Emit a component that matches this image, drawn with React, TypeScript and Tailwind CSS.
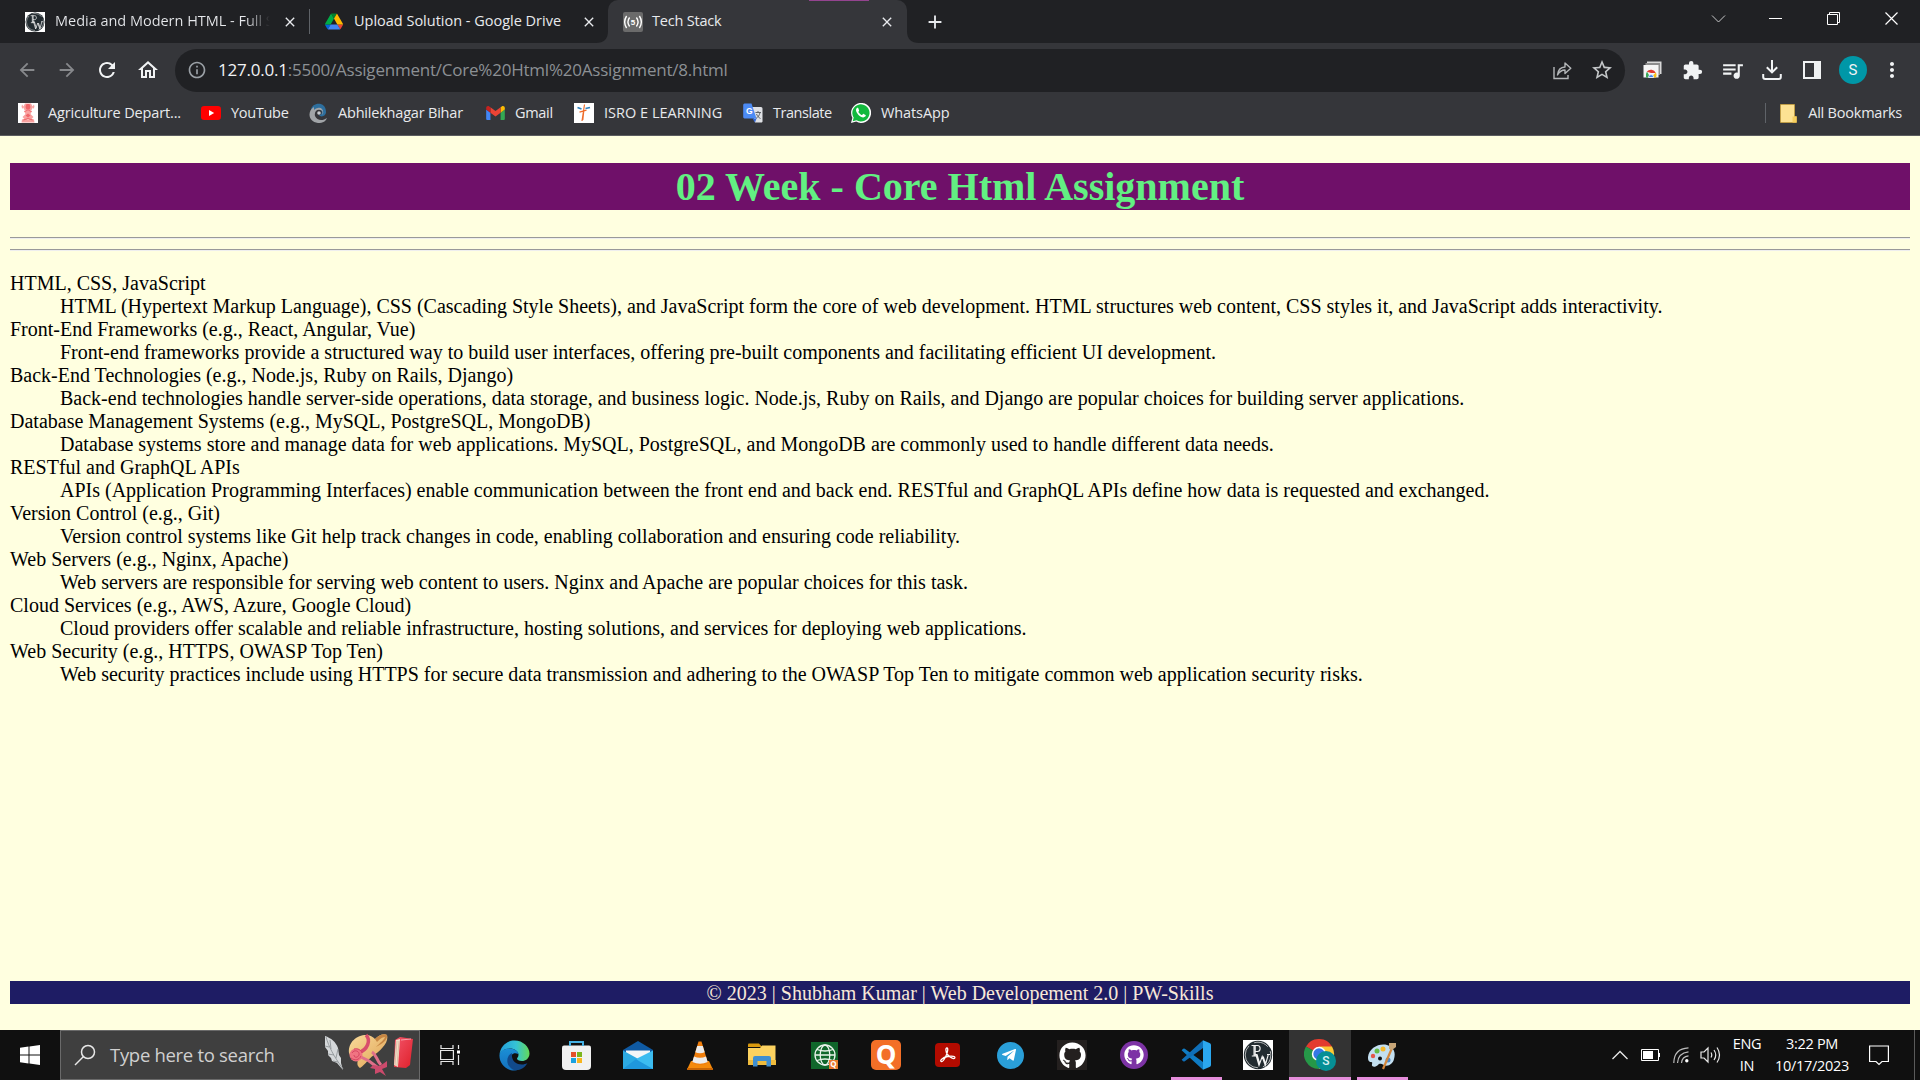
import React from "react";
import {
  MdArrowBack, MdArrowForward, MdRefresh, MdOutlineHome, MdInfoOutline, MdStarOutline,
  MdExtension, MdQueueMusic, MdMoreVert, MdClose, MdAdd,
} from "react-icons/md";
import { FaGithub, FaTelegramPlane } from "react-icons/fa";

const ui = "font-['Open_Sans','Noto_Sans',sans-serif]";

function PW({ size }: { size: number }) {
  return (
    <svg width={size} height={size} viewBox="0 0 30 30" className="shrink-0">
      <rect width="30" height="30" fill="#fff" />
      <circle cx="15" cy="15" r="14.2" fill="#222b30" />
      <circle cx="15" cy="15" r="12.8" fill="none" stroke="#d8d8d8" strokeWidth="0.8" strokeDasharray="15 5 30 6" />
      <path d="M8.500 5.500h6c3.500 0 3.500 6 0 6H12M11 5.500V16M12.200 5.500V16M8.800 16h5.400" fill="none" stroke="#f2f2f2" strokeWidth="1.100" />
      <path d="M11.500 14.500h3M13 15l3 10.500 3.200-9 3 9 3-10.500M14.200 15l2.600 9M20.200 16.500l2.500 7.500M24 14.500h3" fill="none" stroke="#f2f2f2" strokeWidth="1.100" />
    </svg>
  );
}

function Drive() {
  return (
    <svg width="18" height="17" viewBox="0 0 87.3 78" className="shrink-0">
      <path d="m6.6 66.85 3.85 6.65c.8 1.4 1.95 2.5 3.3 3.3l13.75-23.8h-27.5c0 1.55.4 3.1 1.2 4.5z" fill="#0066da" />
      <path d="m43.65 25-13.75-23.8c-1.35.8-2.5 1.9-3.3 3.3l-25.4 44a9.06 9.06 0 0 0 -1.2 4.5h27.5z" fill="#00ac47" />
      <path d="m73.55 76.8c1.35-.8 2.5-1.9 3.3-3.3l1.6-2.75 7.65-13.25c.8-1.4 1.2-2.95 1.2-4.5h-27.502l5.852 11.5z" fill="#ea4335" />
      <path d="m43.65 25 13.75-23.8c-1.35-.8-2.9-1.2-4.5-1.2h-18.5c-1.6 0-3.15.45-4.5 1.2z" fill="#00832d" />
      <path d="m59.8 53h-32.3l-13.75 23.8c1.35.8 2.9 1.2 4.5 1.2h50.8c1.6 0 3.15-.45 4.5-1.2z" fill="#4285f4" />
      <path d="m73.4 26.5-12.7-22c-.8-1.4-1.95-2.5-3.3-3.3l-13.75 23.8 16.15 28h27.45c0-1.55-.4-3.1-1.2-4.5z" fill="#ffba00" />
    </svg>
  );
}

function LiveServer() {
  return (
    <svg width="20" height="20" viewBox="0 0 20 20" className="shrink-0">
      <rect width="20" height="20" rx="2" fill="#6b6b6b" />
      <g fill="none" stroke="#fff" strokeWidth="1.4">
        <path d="M3.6 4Q-.3 10 3.6 16M6.6 5.5Q3.2 10 6.6 14.5M16.4 4Q20.3 10 16.4 16M13.4 5.5Q16.8 10 13.4 14.5" />
      </g>
      <text x="10" y="12.800" fontSize="8" fontWeight="700" textAnchor="middle" fill="#fff" fontFamily="Liberation Sans">5</text>
    </svg>
  );
}

function Agriculture() {
  return (
    <svg width="20" height="20" viewBox="0 0 20 20">
      <rect width="20" height="20" fill="#fff" />
      <g fill="#f9a3a1">
        <path d="M7 .500h6l1.500 3-1 4h-7l-1-4z" />
        <path d="M4 1.500l2 2.500-1 2-1.500-2zM16 1.500L14 4l1 2 1.500-2zM6 8h8l-1.500 3 3 3-2 2h-7l-2-2 3-3z" />
        <path d="M4 16.500l3-1 3 1 3-1 3 1 .500 3h-13z" />
      </g>
      <path d="M8.500 1h3l1 3-1 2.500h-3l-1-2.500zM7.500 12.500l2.500-2 2.500 2-2.500 2z" fill="#f0666a" />
      <path d="M6.500 8.500l3.500-1.500 3.500 1.500M5.500 17l4.500-1.500 4.500 1.500" fill="none" stroke="#f0666a" />
    </svg>
  );
}

function YouTube() {
  return (
    <svg width="20" height="14" viewBox="0 0 20 14">
      <rect width="20" height="14" rx="3.2" fill="#f00" />
      <path d="M8 4l5.2 3L8 10z" fill="#fff" />
    </svg>
  );
}

function Abhilekh() {
  return (
    <svg width="19" height="20" viewBox="0 0 19 20">
      <path d="M2 7C3-1 17-2 17 9c0 4-5 6-7 3 4 0 4-6-1-6C6 6 4 9 4 12z" fill="#2d6f9e" />
      <path d="M5 4C-2 8-1 19 9 20c5 0 8-2 9-5-4 3-10 3-12-2-1-4 2-7 5-6 3 0 3 3 2 5 3-3 0-8-4-7-2 0-3 1-4 2z" fill="#a0a4a7" />
      <circle cx="10" cy="10" r="1.8" fill="#c8ccd0" />
    </svg>
  );
}

function Gmail() {
  return (
    <svg width="19" height="14" viewBox="52 42 88 66">
      <path fill="#4285f4" d="M58 108h14V74L52 59v43c0 3.32 2.69 6 6 6" />
      <path fill="#34a853" d="M120 108h14c3.32 0 6-2.69 6-6V59l-20 15" />
      <path fill="#fbbc04" d="M120 48v26l20-15v-8c0-7.42-8.47-11.65-14.4-7.2" />
      <path fill="#ea4335" d="M72 74V48l24 18 24-18v26L96 92" />
      <path fill="#c5221f" d="M52 51v8l20 15V48l-5.6-4.2c-5.94-4.45-14.4-.22-14.4 7.2" />
    </svg>
  );
}

function Isro() {
  return (
    <svg width="20" height="20" viewBox="0 0 20 20">
      <rect width="20" height="20" fill="#fff" />
      <path d="M10.500 1.500L8 18M9.800 7.500l-1 9.500M5.500 9.200l7-2" stroke="#ee6c2b" strokeWidth="1.200" fill="none" />
      <path d="M3.500 4.500l4 1.500M11.500 5.600l4.500-1.200" stroke="#2d80bd" strokeWidth="1.600" />
    </svg>
  );
}

function Translate() {
  return (
    <svg width="20" height="20" viewBox="0 0 20 20">
      <path d="M8 4h10a1.5 1.5 0 0 1 1.5 1.5v12A1.5 1.5 0 0 1 18 19.500h-6z" fill="#dfe1e5" />
      <path d="M12.500 9.500h5.500M15 8v1.500M17 9.500c-.5 3-2 4.500-4 6M13.500 11c.8 2 2.200 3.600 4 4.500" stroke="#5f6368" fill="none" />
      <path d="M9.500 15.500h4L12 19.500z" fill="#3367d6" />
      <path d="M1.500.500h7l5 15h-12A1.500 1.500 0 0 1 .200 14V2A1.500 1.500 0 0 1 1.500.500z" fill="#4c8bf5" />
      <text x="6.200" y="10.800" fontSize="8.500" fontWeight="700" textAnchor="middle" fill="#fff" fontFamily="Liberation Sans">G</text>
    </svg>
  );
}

function WhatsApp() {
  return (
    <svg width="20" height="20" viewBox="0 0 20 20">
      <path d="M0 20l1.400-5.200A10 10 0 1 1 5.200 18.600z" fill="#fff" />
      <path d="M1.700 18.300l1-3.700A8.600 8.600 0 1 1 5.500 17.300z" fill="#12b93d" />
      <path d="M7.300 5.200c-.3-.6-1-.5-1.400-.1C4 7 5.500 9.800 7.500 11.900c2.200 2.200 5 3.400 6.700 1.700.6-.6.700-1.500.400-1.700l-2-1c-.4-.1-.600 0-1.200.9-.3.400-1 0-1.700-.4-1.200-.8-2.300-2.100-2.300-2.500 0-.3.800-.9.700-1.400z" fill="#fff" />
    </svg>
  );
}

function ShareIcon() {
  return (
    <svg width="19" height="19" viewBox="0 0 19 19" fill="none" stroke="#b4b7b9" strokeWidth="1.400">
      <path d="M1 6v11.500h14V14" />
      <path d="M4.500 14C5 9 8 6.200 12 6V2l5.800 5.300L12 12.500V9c-3.500 0-5.500 1.500-7.500 5z" strokeLinejoin="round" />
    </svg>
  );
}

function CaptureIcon() {
  return (
    <svg width="19" height="18" viewBox="0 0 19 18">
      <path d="M4 .500h14.500V13H15V4H4z" fill="#d8d8d8" />
      <rect x="2.500" y="2" width="14.500" height="12" fill="#8d8d8d" />
      <rect x=".500" y="4" width="15" height="12.500" fill="#f5f5f5" />
      <path d="M3 16.500a5.300 6.500 0 0 1 1-6l3.300 6z" fill="#3aa757" />
      <path d="M3.800 10.800a5.200 5.200 0 0 1 9 1.200H8z" fill="#e33b2e" />
      <path d="M12.800 11.500c1 1.500.8 3.500.2 5H8z" fill="#fbc116" />
      <path d="M5.500 16.500a2.600 2.900 0 0 1 5.200 0z" fill="#4285f4" stroke="#fff" strokeWidth=".8" />
    </svg>
  );
}

function DownloadIcon() {
  return (
    <svg width="20" height="20" viewBox="0 0 20 20" fill="none" stroke="#f1f3f4" strokeWidth="2">
      <path d="M10 0v12M4.800 7.200L10 12.400l5.200-5.200M1.200 14v3q0 2 2 2h13.600q2 0 2-2v-3" />
    </svg>
  );
}

const bookmarks: [React.ReactNode, string, string, string][] = [
  [<Agriculture />, "Agriculture Depart...", "w-[183px]", "tracking-[-0.15px]"],
  [<YouTube />, "YouTube", "w-[108px]", "tracking-[-0.3px]"],
  [<Abhilekh />, "Abhilekhagar Bihar", "w-[177px]", "tracking-[-0.2px]"],
  [<Gmail />, "Gmail", "w-[88px]", "tracking-[-0.3px]"],
  [<Isro />, "ISRO E LEARNING", "w-[169px]", "tracking-[0.02px]"],
  [<Translate />, "Translate", "w-[108px]", "tracking-[-0.45px]"],
  [<WhatsApp />, "WhatsApp", "w-[110px]", "tracking-[-0.1px]"],
];

const stack: [string, string][] = [
  ["HTML, CSS, JavaScript", "HTML (Hypertext Markup Language), CSS (Cascading Style Sheets), and JavaScript form the core of web development. HTML structures web content, CSS styles it, and JavaScript adds interactivity."],
  ["Front-End Frameworks (e.g., React, Angular, Vue)", "Front-end frameworks provide a structured way to build user interfaces, offering pre-built components and facilitating efficient UI development."],
  ["Back-End Technologies (e.g., Node.js, Ruby on Rails, Django)", "Back-end technologies handle server-side operations, data storage, and business logic. Node.js, Ruby on Rails, and Django are popular choices for building server applications."],
  ["Database Management Systems (e.g., MySQL, PostgreSQL, MongoDB)", "Database systems store and manage data for web applications. MySQL, PostgreSQL, and MongoDB are commonly used to handle different data needs."],
  ["RESTful and GraphQL APIs", "APIs (Application Programming Interfaces) enable communication between the front end and back end. RESTful and GraphQL APIs define how data is requested and exchanged."],
  ["Version Control (e.g., Git)", "Version control systems like Git help track changes in code, enabling collaboration and ensuring code reliability."],
  ["Web Servers (e.g., Nginx, Apache)", "Web servers are responsible for serving web content to users. Nginx and Apache are popular choices for this task."],
  ["Cloud Services (e.g., AWS, Azure, Google Cloud)", "Cloud providers offer scalable and reliable infrastructure, hosting solutions, and services for deploying web applications."],
  ["Web Security (e.g., HTTPS, OWASP Top Ten)", "Web security practices include using HTTPS for secure data transmission and adhering to the OWASP Top Ten to mitigate common web application security risks."],
];

function TabStrip() {
  return (
    <div className="flex h-[43px] items-center bg-[#202124] pl-[25px] text-[14.5px] text-[#e8eaed]">
      <PW size={20} />
      <div className="ml-[10px] w-[217px] whitespace-nowrap bg-gradient-to-r from-[#e8eaed] from-[88%] to-transparent to-[99%] bg-clip-text pb-[2px] tracking-[-0.02px] text-transparent">
        Media and Modern HTML - Full S
      </div>
      <MdClose size={16} className="ml-[10px] shrink-0" />
      <div className="ml-[11px] h-[25px] w-px shrink-0 bg-[#5f6368]" />
      <div className="ml-[15px]"><Drive /></div>
      <div className="ml-[11px] w-[227px] whitespace-nowrap pb-[2px] tracking-[-0.01px]">Upload Solution - Google Drive</div>
      <MdClose size={16} className="shrink-0" />
      <svg width="12" height="12" viewBox="0 0 12 12" className="-ml-px shrink-0 self-end"><path d="M12 0v12H0C8 12 12 8 12 0z" fill="#35363a" /></svg>
      <div className="relative flex h-full w-[299px] shrink-0 items-center rounded-t-[10px] bg-[#35363a] pl-[15px]">
        <div className="absolute left-[201px] top-0 h-px w-[60px] bg-[#94448f]" />
        <LiveServer />
        <div className="ml-[9px] w-[227px] pb-[2px] tracking-[-0.2px]">Tech Stack</div>
        <MdClose size={16} className="shrink-0" />
      </div>
      <svg width="12" height="12" viewBox="0 0 12 12" className="shrink-0 self-end"><path d="M0 0v12h12C4 12 0 8 0 0z" fill="#35363a" /></svg>
      <MdAdd size={22} className="ml-[5px] shrink-0" />
      <div className="ml-auto flex h-full items-start gap-[43px] pr-[21px] pt-[11px]">
        <svg width="15" height="15" viewBox="0 0 15 15" className="mr-[-1px]" fill="none" stroke="#c8c9ca"><path d="M1 4.500l6.500 6.500L14 4.500" /></svg>
        <svg width="15" height="15" viewBox="0 0 15 15" fill="none" stroke="#fff"><path d="M1 7.500h13" /></svg>
        <svg width="15" height="15" viewBox="0 0 15 15" fill="none" stroke="#fff"><path d="M1.500 3.500h10v10h-10zM3.500 3V1.500h10v10H12" /></svg>
        <svg width="15" height="15" viewBox="0 0 15 15" fill="none" stroke="#fff" strokeWidth="1.200"><path d="M1.500 1.500l12 12M13.500 1.500l-12 12" /></svg>
      </div>
    </div>
  );
}

function Toolbar() {
  return (
    <div className="flex h-[53px] items-center bg-[#35363a] pl-[16px] pt-[1px] text-[#f1f3f4]">
      <MdArrowBack size={22} className="shrink-0 text-[#87898c]" />
      <MdArrowForward size={22} className="ml-[18px] shrink-0 text-[#87898c]" />
      <MdRefresh size={24} className="ml-[17px] shrink-0" />
      <MdOutlineHome size={24} className="ml-[17px] shrink-0" />
      <div className="ml-[15px] flex h-[43px] w-[1450px] shrink-0 items-center rounded-full bg-[#202124] pl-[12px] pr-[11px]">
        <MdInfoOutline size={20} className="shrink-0 text-[#9aa0a6]" />
        <div className="ml-[11px] whitespace-nowrap pb-px text-[17px] tracking-[-0.22px] text-[#8c9094]">
          <span className="text-[#f1f3f4]">127.0.0.1</span>:5500/Assigenment/Core%20Html%20Assignment/8.html
        </div>
        <div className="ml-auto"><ShareIcon /></div>
        <MdStarOutline size={24} className="ml-[18px] text-[#c4c7c9]" />
      </div>
      <div className="flex items-center">
        <div className="flex w-[40px] justify-center pl-[14px]"><CaptureIcon /></div>
        <div className="flex w-[40px] justify-center pl-[14px]"><MdExtension size={21} /></div>
        <div className="flex w-[40px] justify-center pl-[14px]"><MdQueueMusic size={25} className="-mx-1" /></div>
        <div className="flex w-[40px] justify-center pl-[14px]"><DownloadIcon /></div>
        <div className="flex w-[40px] justify-center pl-[14px]">
          <div className="h-[18px] w-[18px] border-2 border-r-[7px] border-[#f1f3f4]" />
        </div>
        <div className="ml-[14px] flex h-[28px] w-[28px] items-center justify-center rounded-full bg-[#0097a7] font-['Roboto',sans-serif] text-[15px]">S</div>
        <MdMoreVert size={24} className="ml-[13px]" />
      </div>
    </div>
  );
}

function Bookmarks() {
  return (
    <div className="flex h-[40px] items-center border-b border-[#5c5d60] bg-[#35363a] pb-[5px] pl-[18px] text-[14.5px] text-[#e8eaed]">
      {bookmarks.map(([icon, label, width, tracking]) => (
        <div key={label} className={`flex shrink-0 items-center gap-[10px] whitespace-nowrap ${width} ${tracking}`}>
          <span className="shrink-0">{icon}</span>
          <span>{label}</span>
        </div>
      ))}
      <div className="ml-auto h-[20px] w-px bg-[#5f6368]" />
      <svg width="17" height="19" viewBox="0 0 17 19" className="ml-[14px]">
        <path d="M.500.500h14v12h2v6h-16z" fill="#fde293" stroke="#d9a933" strokeWidth=".6" />
        <path d="M12.500 18.500v-6h4v6z" fill="#f6cf5e" />
      </svg>
      <div className="ml-[11px] mr-[18px] whitespace-nowrap tracking-[-0.22px]">All Bookmarks</div>
    </div>
  );
}

function Page() {
  return (
    <main className="flex h-[894px] flex-col bg-[#ffffe0] px-[10px] pt-[27px] font-['Liberation_Serif',serif] text-[20px] leading-[23px] text-black">
      <h1 className="h-[47px] bg-[#6f1069] text-center text-[40px] font-bold leading-[47px] text-[#62f082]">02 Week - Core Html Assignment</h1>
      <div className="mt-[27px] h-[2px] border-b border-t border-b-[#eeeeee] border-t-[#9a9a9a]" />
      <div className="mt-[10px] h-[2px] border-b border-t border-b-[#eeeeee] border-t-[#9a9a9a]" />
      <dl className="mt-[21px]">
        {stack.map(([term, text]) => (
          <React.Fragment key={term}>
            <dt>{term}</dt>
            <dd className="ml-[50px] whitespace-nowrap">{text}</dd>
          </React.Fragment>
        ))}
      </dl>
      <footer className="mb-[26px] mt-auto h-[23px] bg-[#1e1c64] text-center leading-[25px] text-[#f8e8d8]">© 2023 | Shubham Kumar | Web Developement 2.0 | PW-Skills</footer>
    </main>
  );
}

function SearchArt() {
  return (
    <svg width="92" height="46" viewBox="0 0 92 46" className="shrink-0">
      <defs>
        <linearGradient id="brim" x1="0" y1="0" x2="1" y2="1">
          <stop offset="0" stopColor="#f9dc9c" /><stop offset="1" stopColor="#e0a254" />
        </linearGradient>
        <linearGradient id="cover" x1="0" y1="0" x2="1" y2="1">
          <stop offset="0" stopColor="#f2556a" /><stop offset="1" stopColor="#e0202a" />
        </linearGradient>
      </defs>
      <path d="M1 4c6 2 11 6 13 12l1 7 2 3 0 5 2 7-6-7-5-2-1-3-3-3 0-4-3-4z" fill="#d5d8da" />
      <path d="M2 5c3 10 7 18 17 32M7 17l-1-9M12 26l2-9M5 15l-4-1M10 23l-6-1M14 30l-5-1" stroke="#909599" fill="none" strokeWidth=".9" />
      <path d="M25 21C24 10 33 3 42 3c4 0 7 2 9 4 4-4 9-6 12-4 2 6-4 14-13 20-6 4-8 9-14 13-3-2-3-5-2-8-5-1-8-4-9-7z" fill="url(#brim)" />
      <path d="M51 7c4-4 9-6 12-4 1 5-5 9-11 12 4-4 8-7 9-10-3 0-6 3-8 5z" fill="#c78643" />
      <path d="M42 3c5 5 2 15-8 18" stroke="#d84d6c" strokeWidth="3.500" fill="none" />
      <path d="M37 25l8 4 8 6M48 20c5 3 4 8 9 13" stroke="#e0708a" strokeWidth="3" fill="none" />
      <path d="M49 33l7 1 7-5 0 6-5 2 4 7-6-4-5 2 0-5-5-1z" fill="#cc4a6c" />
      <circle cx="32" cy="23" r="6.500" fill="#f07482" />
      <path d="M28 21c2-4 8-2 7 2-1 3-5 3-5 0M27 26c4 3 8 2 10-2M30 17c4-1 7 1 8 4" fill="none" stroke="#d4405c" strokeWidth=".9" />
      <path d="M71 8l5-3 13 2-3 26-4 3-12-1z" fill="url(#cover)" />
      <path d="M72 8l4-1-2 28-4-2z" fill="#f5dfcb" />
      <path d="M73 9l-2 24M75 9l-2 25" stroke="#c8a88c" strokeWidth=".6" />
      <path d="M77 8l10-1" stroke="#f7a0a8" />
    </svg>
  );
}

function Edge() {
  return (
    <svg width="31" height="31" viewBox="0 0 31 31">
      <defs>
        <linearGradient id="edgeTop" x1="0" x2="1"><stop offset="0" stopColor="#229ddb" /><stop offset=".55" stopColor="#35c3d6" /><stop offset="1" stopColor="#64d958" /></linearGradient>
        <linearGradient id="edgeLow" y1="0" y2="1" x2="0"><stop offset="0" stopColor="#1b8fd6" /><stop offset="1" stopColor="#1470bd" /></linearGradient>
      </defs>
      <path d="M.500 15C1 6 8 .500 15.500.500 24 .500 30.500 7 30.500 13.500c0 5-4 7.500-7.500 7.500-3 0-5-1-5-2.200 0-.9 1.500-1.500 1.500-4C19.500 11 15 8.500 11 8.500 5 8.500 1.500 12 .500 15z" fill="url(#edgeTop)" />
      <path d="M.500 15C1.500 11 5.500 8.500 10.500 8.500c5 0 8.500 2.500 9 5.500-5-2.500-8 1-8 4.500 0 6 6 9 13 6.500-3 4-6.500 5.500-9.500 5.500C6.500 30.500 0 23 .500 15z" fill="url(#edgeLow)" />
      <path d="M13 13C8 15 7 22 10 26c2 3 5 4.500 7 4.300 5-.2 9-3 11.500-7.300-6 3.500-17 1-15.500-10z" fill="#114a8b" />
    </svg>
  );
}

function Store() {
  return (
    <svg width="29" height="30" viewBox="0 0 29 30">
      <path d="M2 5.500h25q2 0 2 2V26q0 4-4 4H4q-4 0-4-4V7.500q0-2 2-2z" fill="#f1f1f1" />
      <path d="M8 6V2h13v4" fill="none" stroke="#45b1e4" strokeWidth="2" />
      <path d="M9 12h5v5H9z" fill="#e4502b" /><path d="M15 12h5v5h-5z" fill="#7cb51d" />
      <path d="M9 18h5v5H9z" fill="#1aa1df" /><path d="M15 18h5v5h-5z" fill="#f8b51d" />
    </svg>
  );
}

function Mail() {
  return (
    <svg width="30" height="28" viewBox="0 0 30 28">
      <path d="M0 9L15 0l15 9v8H0z" fill="#0f5aa3" />
      <path d="M3 9.500h24v9H3z" fill="#f3f6f8" />
      <path d="M0 9.500L19 20 30 28H0z" fill="#2caae3" />
      <path d="M30 9.500V28H2L13 18z" fill="#3cbcf0" />
      <path d="M0 28l13-10 3 2 14 8z" fill="#1f97dc" />
    </svg>
  );
}

function Vlc() {
  return (
    <svg width="26" height="29" viewBox="0 0 26 29">
      <path d="M4 20h18l4 8.500H0z" fill="#f58a0b" />
      <path d="M0 27h26v2H0z" fill="#c96504" />
      <path d="M11.500.500h3L21 22q-8 4-16 0z" fill="#f07e0c" />
      <path d="M10.200 5h5.600l1.900 6.200q-4.700 2-9.400 0zM7 15.500q6 2.500 12 0l1.700 5.500q-7.700 3.500-15.400 0z" fill="#ececec" />
    </svg>
  );
}

function Explorer() {
  return (
    <svg width="28" height="25" viewBox="0 0 28 25">
      <path d="M0 1.500Q0 .500 1 .500h10l3 3.500H0z" fill="#d9990e" />
      <path d="M0 5h12l2-2.500h13.500V22H0z" fill="#fcd260" />
      <path d="M0 17h28v5H0z" fill="#efbb3c" />
      <path d="M5 23.500V15q0-2 2-2h14q2 0 2 2v8.500h-4.500V18h-9v5.500z" fill="#3f8fd1" />
    </svg>
  );
}

function GlobeQ() {
  return (
    <svg width="27" height="27" viewBox="0 0 27 27">
      <rect width="27" height="27" fill="#10662b" />
      <g fill="none" stroke="#eaf3ec" strokeWidth="1.300">
        <circle cx="14" cy="13" r="10" /><ellipse cx="14" cy="13" rx="4.800" ry="10" /><path d="M4 13h20M6 7.500q8 3 16 0M6 18.500q8-3 16 0" />
      </g>
      <rect x="18" y="18" width="9" height="9" fill="#ea7a2f" />
      <text x="22.500" y="25.300" fontSize="8" fontWeight="700" textAnchor="middle" fill="#fff" fontFamily="Open Sans">Q</text>
    </svg>
  );
}

function Quick() {
  return (
    <div className="flex h-[30px] w-[30px] items-center justify-center rounded-[5px] bg-[#f36f27] pb-[2px] text-[26px] font-bold leading-none text-white">Q</div>
  );
}

function Acrobat() {
  return (
    <svg width="25" height="24" viewBox="0 0 25 24" className="-ml-px">
      <rect width="25" height="24" rx="4" fill="#b30b00" />
      <path d="M6.500 18.500c-2.500-.5 1-4 6-5 5-.9 8 0 7.300 1.500-.9 1.500-5-.5-7.300-3.500-2-3-2-6.500-.600-6.500 1.600 0 .8 4.500-1.200 8.500-1.400 2.900-3 5.300-4.200 5z" fill="none" stroke="#fff" strokeWidth="1.300" />
    </svg>
  );
}

function VsCode() {
  return (
    <svg width="30" height="30" viewBox="0 0 30 30">
      <path d="M.600 10.200l1.600-1.400q.8-.6 1.600 0L22 22v7.800z" fill="#0f7cc4" />
      <path d="M.600 19.800l1.600 1.400q.8.600 1.600 0L22 8V.200z" fill="#0f6fb8" />
      <path d="M22 .200l6.500 2.800Q30 3.600 30 5v20q0 1.400-1.500 2L22 29.800z" fill="#2ba7ef" />
    </svg>
  );
}

function Chrome() {
  return (
    <svg width="32" height="32" viewBox="0 0 32 32">
      <path d="M15 15L2 7.500A15 15 0 0 1 28 7.500z" fill="#e33b2e" />
      <path d="M2 7.500A15 15 0 0 0 15 30l6.500-11L15 15z" fill="#269848" />
      <path d="M28 7.500A15 15 0 0 1 15 30L21.500 18.500 15 7.500z" fill="#fcc934" />
      <circle cx="15" cy="15" r="7.200" fill="#fff" /><circle cx="15" cy="15" r="5.700" fill="#3578e5" />
      <circle cx="22" cy="22" r="10" fill="#068f95" />
      <text x="22" y="26" fontSize="12" fontWeight="500" textAnchor="middle" fill="#d9f1f2" fontFamily="Roboto">S</text>
    </svg>
  );
}

function Paint() {
  return (
    <svg width="30" height="29" viewBox="0 0 30 29">
      <path d="M1 16C2 7 12 2 20 4c7 2 9 8 7 14-1 5-6 8-10 6-3-1-4-2-6 0-3 3-7 2-6-1 1-2-1-2-2-2-2-1-2-3-2-5z" fill="#c3dff0" />
      <circle cx="13" cy="17.500" r="2" fill="#101010" />
      <circle cx="6" cy="15" r="2.200" fill="#e45749" /><circle cx="10" cy="10" r="2.500" fill="#65bd45" />
      <circle cx="16" cy="8" r="2.500" fill="#f5b82b" /><circle cx="21" cy="19" r="2.500" fill="#4a87ca" />
      <path d="M25 7L16 28" stroke="#d4863b" strokeWidth="2.200" />
      <path d="M22 2l7 0 0 4-4 3-3-1z" fill="#c7a577" />
    </svg>
  );
}

const apps: [React.ReactNode, string][] = [
  [<Edge />, ""], [<Store />, ""], [<Mail />, ""], [<Vlc />, ""], [<Explorer />, ""], [<GlobeQ />, ""], [<Quick />, ""], [<Acrobat />, ""],
  [<div className="flex h-[27px] w-[27px] items-center justify-center rounded-full bg-[#2a9fd8] pr-[2px] text-white"><FaTelegramPlane size={16} /></div>, ""],
  [<div className="flex h-[30px] w-[30px] items-center justify-center bg-[#24201f] text-white"><FaGithub size={27} /></div>, ""],
  [<div className="flex h-[28px] w-[28px] items-center justify-center rounded-full bg-[#7d33a5] text-white"><FaGithub size={20} /></div>, ""],
  [<VsCode />, "open"], [<PW size={30} />, ""], [<Chrome />, "active"], [<Paint />, "open"],
];

function Taskbar() {
  return (
    <div className="flex h-[50px] items-center bg-[#101010] text-white">
      <div className="flex w-[60px] shrink-0 justify-center">
        <svg width="20" height="20" viewBox="0 0 20 20" fill="#fff"><path d="M0 2.800l8.500-1.200v8H0zM9.500 1.500L20 0v9.600H9.500zM0 10.500h8.500v8L0 17.300zM9.500 10.500H20V20L9.500 18.600z" /></svg>
      </div>
      <div className="flex h-[50px] w-[360px] shrink-0 items-center border border-[#6a6a6a] bg-[#3f3f3f] pl-[13px]">
        <svg width="22" height="22" viewBox="0 0 22 22" fill="none" stroke="#e8e8e8" strokeWidth="1.500"><circle cx="14" cy="8" r="6.500" /><path d="M9.500 12.500L1 21" /></svg>
        <div className="ml-[14px] w-[214px] whitespace-nowrap text-[18.500px] tracking-[-0.3px] text-[#d0d0d0]">Type here to search</div>
        <SearchArt />
      </div>
      <div className="flex w-[63px] shrink-0 justify-start pl-[20px]">
        <svg width="21" height="20" viewBox="0 0 21 20" fill="none" stroke="#e8e8e8" strokeWidth="1.200"><path d="M1 0v3.500h12V0M1 20v-3.500h12V20M.600 5.500h12.800v9H.600zM18.500 0v4M18.500 10v10" /><path d="M17 5.500h3v3h-3z" fill="#fff" stroke="none" /></svg>
      </div>
      {apps.map(([icon, state], i) => (
        <div key={i} className={`relative flex h-full w-[62px] shrink-0 items-center justify-center ${state === "active" ? "bg-[#333333]" : ""}`}>
          {icon}
          {state === "open" && <div className="absolute bottom-0 left-[6px] h-[3px] w-[51px] bg-[#e58ddb]" />}
          {state === "active" && <div className="absolute bottom-0 left-0 h-[3px] w-full bg-[#e58ddb]" />}
        </div>
      ))}
      <div className="ml-auto flex h-full shrink-0 items-center">
        <svg width="16" height="10" viewBox="0 0 16 10" fill="none" stroke="#e8e8e8" strokeWidth="1.300"><path d="M.500 9L8 1.500 15.500 9" /></svg>
        <svg width="20" height="12" viewBox="0 0 20 12" className="ml-[13px]" fill="none" stroke="#fff"><path d="M.500.500h17v11H.500zM18.500 4v4" /><path d="M2 2h10v8H2z" fill="#fff" stroke="none" /></svg>
        <svg width="16" height="16" viewBox="0 0 16 16" className="ml-[12px]" fill="none" stroke="#bdbdbd" strokeWidth="1.200"><path d="M.800 16Q1 1.500 15.500.800M4.500 16Q5 6 15.500 4.800M8.500 16Q9 9.500 15.500 8.800" /><circle cx="13.800" cy="13.800" r="1.700" fill="#fff" stroke="none" /></svg>
        <svg width="21" height="18" viewBox="0 0 21 18" className="ml-[11px]" fill="none" stroke="#e8e8e8" strokeWidth="1.200"><path d="M1 6h3l4-4v14l-4-4H1z" /><path d="M11 6.500q1.500 2.500 0 5M14 4q3.500 5 0 10M17 1.500q5 7.500 0 15" /></svg>
        <div className="ml-[9px] w-[34px] text-center text-[14.500px] leading-[22px] tracking-[-0.3px]">ENG<br />IN</div>
        <div className="ml-[9px] w-[78px] whitespace-nowrap text-center text-[14.500px] leading-[22px] tracking-[-0.3px]">3:22 PM<br />10/17/2023</div>
        <svg width="20" height="21" viewBox="0 0 20 21" className="ml-[18px]" fill="none" stroke="#fff" strokeWidth="1.200"><path d="M.600 1h18.800v15.500H13L10 19.500 7 16.500H.600z" /></svg>
        <div className="ml-[25px] mr-[5px] h-full w-px bg-[#5a5a5a]" />
      </div>
    </div>
  );
}

export default function App() {
  return (
    <div className={`h-[1080px] w-[1920px] overflow-hidden ${ui}`}>
      <TabStrip />
      <Toolbar />
      <Bookmarks />
      <Page />
      <Taskbar />
    </div>
  );
}
